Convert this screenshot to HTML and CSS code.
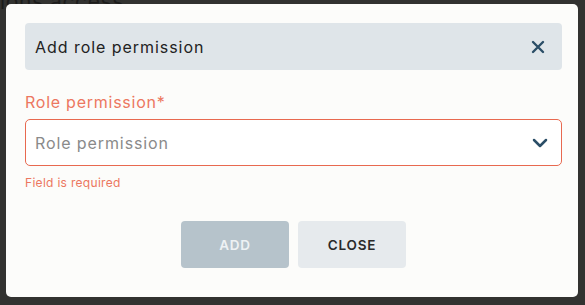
FILE: index.html
```html
<!DOCTYPE html>
<html>
<head>
<meta charset="utf-8">
<link rel="stylesheet" href="styles.css">
</head>
<body>
<div class="page">
  <div class="page-title">ions access</div>
</div>
<div class="overlay">
  <div class="modal">
    <div class="modal-header">
      <span class="modal-title">Add role permission</span>
      <svg class="icon-close" width="14" height="14" viewBox="0 0 14 14"><path d="M2 2 L12 12 M12 2 L2 12" stroke="#2b4e67" stroke-width="2.4" stroke-linecap="round" fill="none"/></svg>
    </div>
    <div class="field">
      <label class="field-label">Role permission*</label>
      <div class="select">
        <span class="placeholder">Role permission</span>
        <svg class="icon-chevron" width="16" height="10" viewBox="0 0 16 10"><path d="M2 2 L8 8 L14 2" stroke="#2b4e67" stroke-width="2.5" stroke-linecap="round" stroke-linejoin="round" fill="none"/></svg>
      </div>
      <div class="field-error">Field is required</div>
    </div>
    <div class="actions">
      <button class="btn btn-add">ADD</button>
      <button class="btn btn-close">CLOSE</button>
    </div>
  </div>
</div>
</body>
</html>
```

FILE: styles.css
```css
html, body {
  margin: 0;
  padding: 0;
  width: 585px;
  height: 305px;
  overflow: hidden;
  background: #323230;
  font-family: Inter, "Noto Sans", sans-serif;
}
.page-title {
  margin-top: -11px;
  font-size: 21px;
  color: #1c1c1b;
  letter-spacing: 0.6px;
}
.overlay {
  position: absolute;
  left: 0;
  top: 0;
  width: 585px;
  height: 305px;
}
.modal {
  position: absolute;
  left: 6px;
  top: 4px;
  width: 572px;
  height: 293px;
  box-sizing: border-box;
  background: #fcfcfa;
  border-radius: 5px;
  padding: 19px 16px 0 19px;
}
.modal-header {
  height: 47px;
  background: #dfe5e9;
  border-radius: 4px;
  display: flex;
  align-items: center;
  justify-content: space-between;
  padding: 0 17px 0 10px;
}
.modal-title {
  font-size: 16px;
  color: #222;
  letter-spacing: 0.95px;
}
.icon-close {
  display: block;
}
.field {
  margin-top: 22px;
}
.field-label {
  display: block;
  font-size: 16px;
  color: #ec7760;
  letter-spacing: 0.75px;
  line-height: 20px;
}
.select {
  margin-top: 7px;
  height: 47px;
  box-sizing: border-box;
  border: 1px solid #e8694f;
  border-radius: 5px;
  background: #fff;
  display: flex;
  align-items: center;
  justify-content: space-between;
  padding: 0 13px 0 9px;
}
.placeholder {
  font-size: 16px;
  color: #8a8a8a;
  letter-spacing: 0.9px;
}
.icon-chevron {
  display: block;
}
.field-error {
  margin-top: 9px;
  font-size: 12px;
  color: #ec7760;
  letter-spacing: 0.3px;
}
.actions {
  margin-top: 31px;
  display: flex;
  justify-content: center;
  gap: 9px;
}
.btn {
  width: 108px;
  height: 47px;
  border: none;
  border-radius: 4px;
  font-family: Inter, "Noto Sans", sans-serif;
  font-size: 13.5px;
  font-weight: 600;
  letter-spacing: 0.8px;
}
.btn-add {
  background: #b6c3cb;
  color: #eef2f4;
}
.btn-close {
  background: #e6eaed;
  color: #2a2a2a;
}
```
